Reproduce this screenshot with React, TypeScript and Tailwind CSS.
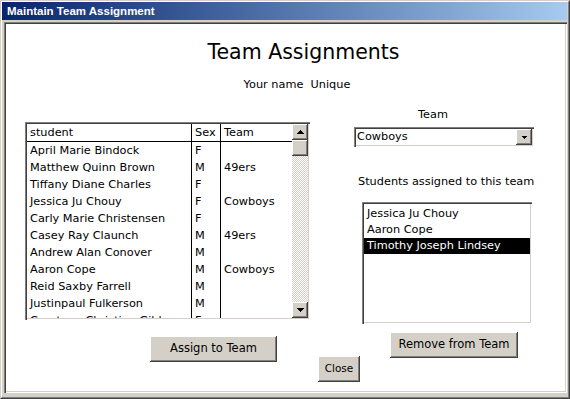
const students: [string, string, string][] = [
  ["April Marie Bindock", "F", ""],
  ["Matthew Quinn Brown", "M", "49ers"],
  ["Tiffany Diane Charles", "F", ""],
  ["Jessica Ju Chouy", "F", "Cowboys"],
  ["Carly Marie Christensen", "F", ""],
  ["Casey Ray Claunch", "M", "49ers"],
  ["Andrew Alan Conover", "M", ""],
  ["Aaron Cope", "M", "Cowboys"],
  ["Reid Saxby Farrell", "M", ""],
  ["Justinpaul Fulkerson", "M", ""],
  ["Courtney Christian Gibbs", "F", ""],
];

const assigned = ["Jessica Ju Chouy", "Aaron Cope", "Timothy Joseph Lindsey"];

const raised =
  "bg-[#d4d0c8] shadow-[inset_-1px_-1px_#404040,inset_1px_1px_#ffffff,inset_-2px_-2px_#808080]";
const sunken =
  "shadow-[inset_1px_1px_#808080,inset_2px_2px_#404040,inset_-1px_-1px_#ffffff,inset_-2px_-2px_#d4d0c8]";

const Arrow = ({ down, small }: { down?: boolean; small?: boolean }) => {
  const d = small
    ? "M0 0h5v1h-1v1h-1v1h-1v-1h-1v-1h-1z"
    : down
      ? "M0 0h7v1h-1v1h-1v1h-1v1h-1v-1h-1v-1h-1v-1h-1z"
      : "M3 0h1v1h1v1h1v1h1v1h-7v-1h1v-1h1v-1h1z";
  const w = small ? 5 : 7;
  const h = small ? 3 : 4;
  return (
    <svg width={w} height={h} viewBox={`0 0 ${w} ${h}`} shapeRendering="crispEdges">
      <path d={d} fill="#000" />
    </svg>
  );
};

const ScrollBar = () => (
  <div className="flex w-[16px] flex-col">
    <div className={`flex h-[16px] items-center justify-center ${raised}`}>
      <Arrow />
    </div>
    <div className={`h-[16px] ${raised}`} />
    <div className="flex-1 bg-[repeating-conic-gradient(#d4d0c8_0%_25%,#ffffff_0%_50%)] bg-[length:2px_2px]" />
    <div className={`flex h-[16px] items-center justify-center ${raised}`}>
      <Arrow down />
    </div>
  </div>
);

const StudentTable = () => (
  <div className={`ml-[19px] mt-[14px] flex h-[198px] w-[285px] bg-white p-[2px] ${sunken}`}>
    <div className="flex-1 overflow-hidden">
      <div className="flex h-[18px] border-b border-black leading-[17px]">
        <div className="w-[165px] border-r border-black pl-[3px]">student</div>
        <div className="w-[29px] border-r border-black pl-[3px]">Sex</div>
        <div className="flex-1 pl-[3px]">Team</div>
      </div>
      {students.map(([name, sex, team]) => (
        <div key={name} className="flex h-[17px] leading-[17px]">
          <div className="w-[165px] whitespace-nowrap border-r border-black pl-[3px]">{name}</div>
          <div className="w-[29px] border-r border-black pl-[3px]">{sex}</div>
          <div className="flex-1 pl-[3px]">{team}</div>
        </div>
      ))}
    </div>
    <ScrollBar />
  </div>
);

const TeamPanel = () => (
  <div className="ml-[44px] flex w-[180px] flex-col">
    <div className="h-[14px] pr-[22px] text-center leading-[14px]">Team</div>
    <div className={`mt-[5px] flex h-[20px] bg-white p-[2px] ${sunken}`}>
      <div className="flex-1 pl-[1px] leading-[16px]">Cowboys</div>
      <div className={`flex w-[16px] items-center justify-center ${raised}`}>
        <Arrow small />
      </div>
    </div>
    <div className="ml-[4px] mt-[28px] h-[14px] whitespace-nowrap leading-[14px]">
      Students assigned to this team
    </div>
    <div className={`ml-[8px] mt-[13px] h-[122px] w-[170px] bg-white p-[2px] ${sunken}`}>
      <div className="pt-[2px]">
        {assigned.map((name, i) => (
          <div
            key={name}
            className={`h-[16px] whitespace-nowrap pl-[3px] leading-[16px] ${
              i === 2 ? "bg-black text-white" : ""
            }`}
          >
            {name}
          </div>
        ))}
      </div>
    </div>
  </div>
);

export default function App() {
  return (
    <div className="h-[399px] w-[570px] overflow-hidden border border-t-[#d4d0c8] border-l-[#d4d0c8] border-r-[#404040] border-b-[#404040] font-['DejaVu_Sans',sans-serif] text-[11.3px] text-black">
      <div className="flex h-full flex-col border border-t-white border-l-white border-r-[#808080] border-b-[#808080] bg-[#d4d0c8]">
        <div className="mr-[1px] h-[18px] bg-gradient-to-r from-[#0a246a] to-[#a6caf0] pl-[5px] font-['Liberation_Sans',Arial,sans-serif] text-[11.5px] font-bold leading-[18px] text-white">
          Maintain Team Assignment
        </div>
        <div className={`mb-[4px] ml-[2px] mr-[1px] mt-[2px] flex-1 overflow-hidden bg-white p-[2px] ${sunken}`}>
          <div className="flex h-full flex-col overflow-hidden">
            <div className="mt-[16px] h-[24px] pl-[36px] text-center text-[20.5px] leading-[24px]">
              Team Assignments
            </div>
            <div className="mt-[14px] h-[14px] whitespace-pre pl-[23px] text-center leading-[14px]">
              Your name  Unique
            </div>
            <div className="mt-[16px] flex items-start">
              <StudentTable />
              <TeamPanel />
            </div>
            <div className="flex items-start">
              <button className={`ml-[144px] mt-[12px] h-[26px] w-[127px] text-[11.5px] ${raised}`}>
                Assign to Team
              </button>
              <button className={`ml-[41px] mt-[32px] h-[26px] w-[42px] text-[10.5px] ${raised}`}>
                Close
              </button>
              <button className={`ml-[30px] mt-[8px] h-[26px] w-[128px] text-[11.5px] ${raised}`}>
                Remove from Team
              </button>
            </div>
          </div>
        </div>
      </div>
    </div>
  );
}
